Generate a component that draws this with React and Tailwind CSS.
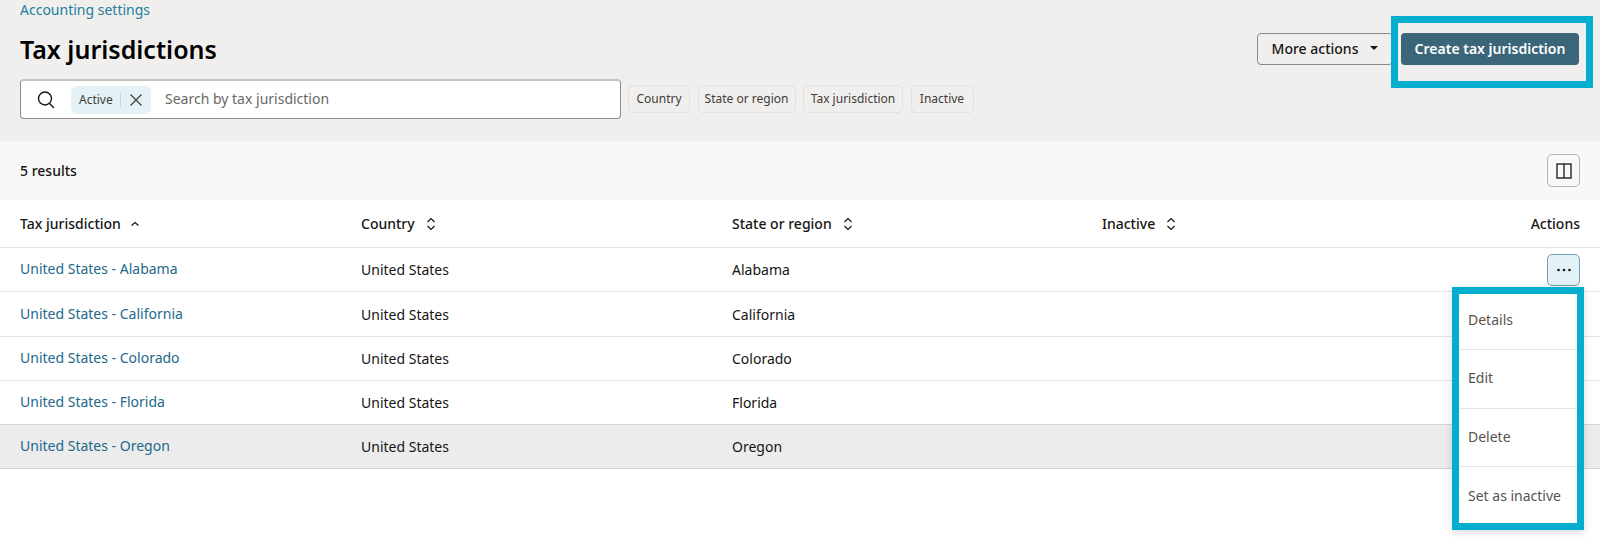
const Chevrons = () => (
  <svg width="12" height="16" viewBox="0 0 12 16" fill="none" stroke="#161513" strokeWidth="1.2" className="ml-[10px]">
    <path d="M2.5 6 L6 2.5 L9.5 6" />
    <path d="M2.5 10 L6 13.5 L9.5 10" />
  </svg>
);

const rows = [
  ["United States - Alabama", "Alabama"],
  ["United States - California", "California"],
  ["United States - Colorado", "Colorado"],
  ["United States - Florida", "Florida"],
  ["United States - Oregon", "Oregon"],
];

const chips = [
  ["Country", "w-[62px]"],
  ["State or region", "w-[98px]"],
  ["Tax jurisdiction", "w-[100px]"],
  ["Inactive", "w-[63px]"],
];

const menu = [
  ["Details", "h-[56px]", "-mt-[4px]"],
  ["Edit", "h-[59px]", "-mt-[3px]"],
  ["Delete", "h-[58px]", "-mt-[3px]"],
  ["Set as inactive", "h-[56px]", "mt-0"],
];

const GRID = "grid grid-cols-[341px_371px_370px_1fr_90px]";

export default function App() {
  return (
    <div className="relative w-[1600px] h-[550px] overflow-hidden bg-white text-[#161513] font-['Noto_Sans',sans-serif] text-[14px]">
      <header className="h-[141px] bg-[#f1efed] px-[20px] pt-[1px]">
        <div className="text-[14px] leading-[18px] text-[#227e9e]">Accounting settings</div>
        <div className="flex items-center justify-between h-[46px] mt-[7px] pr-px">
          <h1 className="text-[25px] leading-[32px] font-semibold text-black">Tax jurisdictions</h1>
          <div className="flex gap-[8px]">
            <button className="flex items-center justify-center w-[136px] h-[32px] pb-[2px] rounded-[4px] border border-[#8a8785] text-[14px] font-medium">
              More actions
              <span className="ml-[12px] w-0 h-0 border-x-[4px] border-x-transparent border-t-[4px] border-t-[#161513]" />
            </button>
            <button className="w-[178px] h-[32px] pb-[2px] rounded-[4px] bg-[#3b6679] text-white text-[14px] font-semibold">Create tax jurisdiction</button>
          </div>
        </div>
        <div className="flex items-center h-[40px] mt-[7px]">
          <div className="flex items-center w-[601px] h-[40px] rounded-[4px] bg-white border border-[#8f8c8a] border-t-[2px] border-t-[#c4c2c0] pl-[14px]">
            <svg width="22" height="22" viewBox="0 0 22 22" fill="none" stroke="#161513" strokeWidth="1.4">
              <circle cx="10" cy="9.5" r="6.5" />
              <path d="M14.5 14.5 L19 19" />
            </svg>
            <div className="flex items-center h-[28px] ml-[14px] w-[80px] rounded-[6px] bg-[#e4f1f7] pl-[8px] text-[12px] text-[#3f3c3a]">
              Active
              <span className="w-px h-[14px] bg-[#c8d4da] ml-[7px]" />
              <svg width="14" height="14" viewBox="0 0 14 14" fill="none" stroke="#46433f" strokeWidth="1.3" className="ml-[8px]">
                <path d="M1.5 1.5 L12.5 12.5 M12.5 1.5 L1.5 12.5" />
              </svg>
            </div>
            <span className="ml-[14px] -mt-[2px] text-[14px] text-[#6a6866]">Search by tax jurisdiction</span>
          </div>
          <div className="flex gap-[7.5px] ml-[7px]">
            {chips.map(([c, w]) => (
              <span key={c} className={`flex items-center justify-center h-[28px] ${w} rounded-[5px] border border-[#e3e1df] text-[12px] text-[#3f3c3a]`}>{c}</span>
            ))}
          </div>
        </div>
      </header>

      <div className="flex items-center justify-between h-[59px] bg-[#f9f8f6] pl-[20px] pr-[20px]">
        <span className="text-[14px] font-medium">5 results</span>
        <button className="flex items-center justify-center w-[33px] h-[33px] rounded-[5px] border border-[#b5b3b1]">
          <svg width="16" height="16" viewBox="0 0 16 16" fill="none" stroke="#161513" strokeWidth="1.3">
            <rect x="1" y="1" width="14" height="14" />
            <path d="M8 1 V15" />
          </svg>
        </button>
      </div>

      <div className={`${GRID} h-[48px] items-center border-b border-[#e6e4e2] pl-[20px] pr-[20px] text-[14px] font-medium`}>
        <div className="flex items-center">
          Tax jurisdiction
          <svg width="12" height="12" viewBox="0 0 12 12" fill="none" stroke="#161513" strokeWidth="1.2" className="ml-[8px]">
            <path d="M2.5 7.5 L6 4.5 L9.5 7.5" />
          </svg>
        </div>
        <div className="flex items-center">Country<Chevrons /></div>
        <div className="flex items-center">State or region<Chevrons /></div>
        <div className="flex items-center">Inactive<Chevrons /></div>
        <div className="text-right">Actions</div>
      </div>

      {rows.map(([name, state], i) => (
        <div key={name} className={`${GRID} ${i === 1 ? "h-[45px]" : "h-[44px]"} items-center border-b pl-[20px] pr-[20px] text-[14px] ${i === 4 ? "bg-[#ececec] border-[#d6d4d2]" : i === 3 ? "border-[#d6d4d2]" : "border-[#e6e4e2]"}`}>
          <a className="text-[#22698a] -mt-[2px]">{name}</a>
          <div>United States</div>
          <div>{state}</div>
          <div />
          <div className="flex justify-end">
            {i === 0 && (
              <button className="flex items-center justify-center w-[33px] h-[32px] rounded-[5px] border border-[#6f9fb5] bg-[#e4f1f7]">
                <svg width="16" height="4" viewBox="0 0 16 4" fill="#161513">
                  <circle cx="2.5" cy="2" r="1.3" />
                  <circle cx="8" cy="2" r="1.3" />
                  <circle cx="13.5" cy="2" r="1.3" />
                </svg>
              </button>
            )}
          </div>
        </div>
      ))}

      <div className="absolute left-[1391px] top-[16px] w-[202px] h-[72px] border-[7px] border-[#04aecf]" />

      <div className="absolute left-[1452px] top-[287px] w-[132px] h-[243px] border-[7px] border-[#04aecf] bg-white shadow-[0_2px_8px_rgba(0,0,0,0.15)] flex flex-col text-[14px] text-[#57534f]">
        {menu.map(([m, h, t], i) => (
          <div key={m} className={`${h} flex items-center pl-[9px] ${i < 3 ? "border-b border-[#e6e4e2]" : ""}`}><span className={t}>{m}</span></div>
        ))}
      </div>
    </div>
  );
}
